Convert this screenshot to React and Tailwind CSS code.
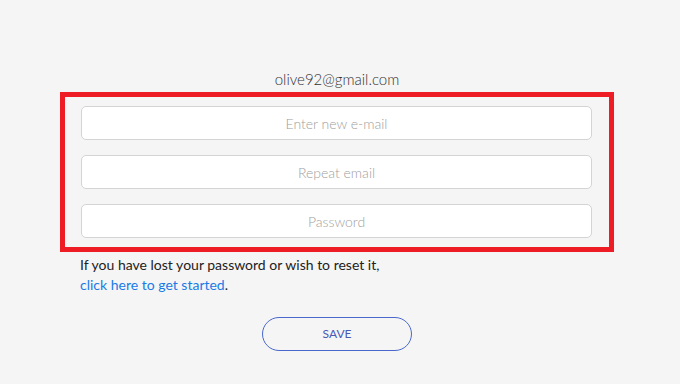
import React from "react";

export default function App() {
  return (
    <div className="min-h-[384px] w-full bg-[#f5f5f5] font-['Lato','Liberation_Sans',sans-serif]">
      <div className="ml-[60px] w-[554px] pt-[69px]">
        <div className="text-center text-[15px] leading-[20px] font-light text-[#333]">olive92@gmail.com</div>
        <div className="mt-[3px] border-[5px] border-[#ee1c25] pl-[16px] pr-[17px] py-[9px] flex flex-col gap-[15px]">
          <input className="h-[34px] w-full rounded-[5px] border border-[#d4d4d4] bg-white text-center text-[14px] font-light text-[#333] placeholder:text-[#a0a0a0] outline-none" placeholder="Enter new e-mail" />
          <input className="h-[34px] w-full rounded-[5px] border border-[#d4d4d4] bg-white text-center text-[14px] font-light text-[#333] placeholder:text-[#a0a0a0] outline-none" placeholder="Repeat email" />
          <input type="password" className="h-[34px] w-full rounded-[5px] border border-[#d4d4d4] bg-white text-center text-[14px] font-light text-[#333] placeholder:text-[#a0a0a0] outline-none" placeholder="Password" />
        </div>
        <div className="pl-[20px] pt-[3px] text-[14px] leading-[20px] text-[#222]">
          <div>If you have lost your password or wish to reset it,</div>
          <div><a className="text-[#1a7ae6]">click here to get started</a>.</div>
        </div>
        <div className="flex justify-center pt-[22px]">
          <button className="h-[34px] w-[150px] rounded-full border border-[#4a68cc] text-[12px] text-[#4a58b8] uppercase">Save</button>
        </div>
      </div>
    </div>
  );
}
